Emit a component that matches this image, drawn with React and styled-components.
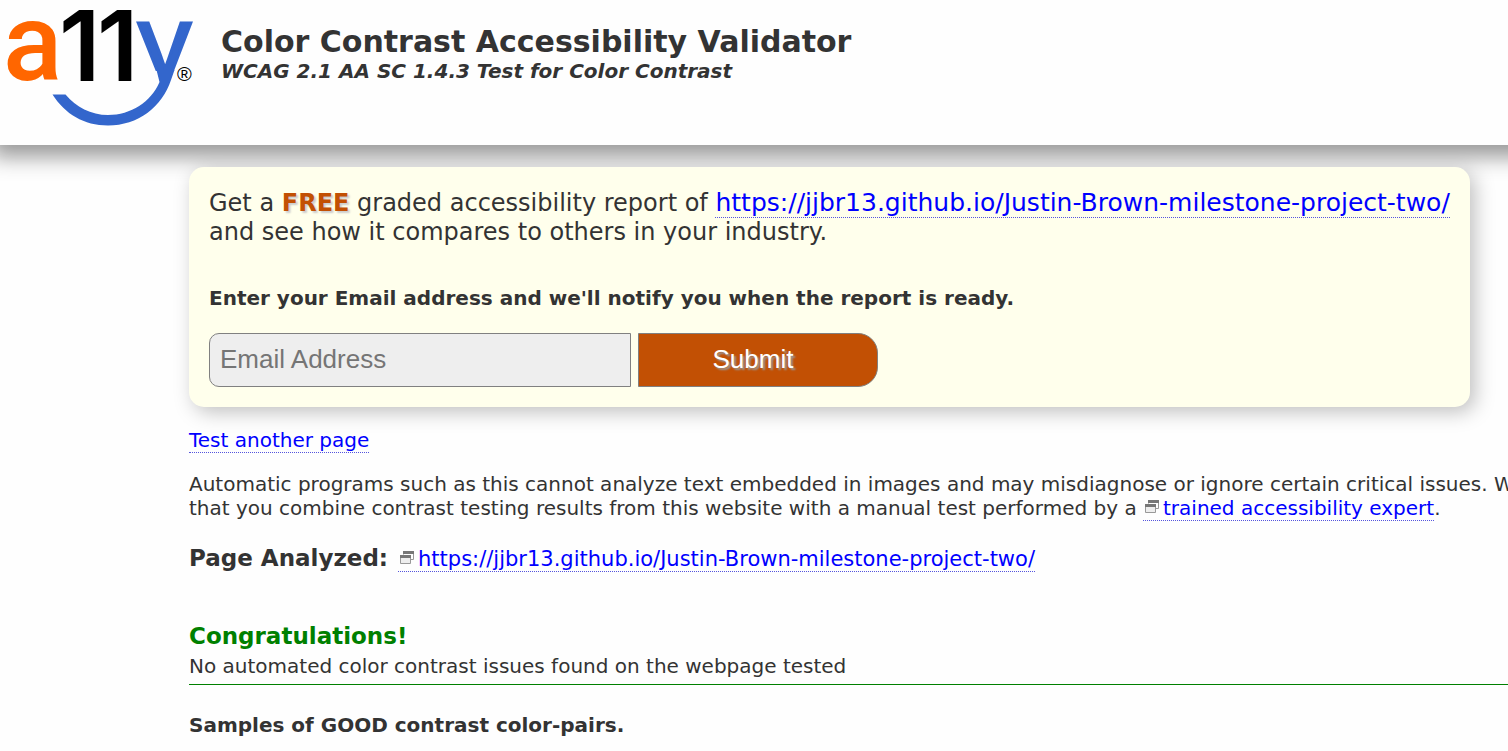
import React from "react";
import styled, { createGlobalStyle } from "styled-components";

const GlobalStyle = createGlobalStyle`
  body {
    margin: 0;
    overflow: hidden;
    background: #fefefe;
    color: #333;
    font: 20px/24px "DejaVu Sans", Verdana, sans-serif;
  }
`;

const Header = styled.header`
  display: flex;
  gap: 25px;
  height: 145px;
  margin-right: -60px;
  background: #fefefe;
  box-shadow: 0 4px 20px 8px #999;
`;

const LogoLink = styled.a`
  display: block;
  width: 196px;
`;

const Logo = styled.svg`
  display: block;
  width: 196px;
  height: 130px;
  overflow: visible;
`;

const Titles = styled.div`
  padding-top: 24px;
`;

const SiteTitle = styled.h1`
  margin: 0;
  font-size: 30px;
  line-height: 36px;
`;

const Subtitle = styled.p`
  margin: 0;
  font-size: 20px;
  line-height: 22px;
  font-weight: bold;
  font-style: italic;
`;

const Main = styled.main`
  padding: 22px 0 0 189px;
  white-space: nowrap;
`;

const Card = styled.section`
  width: fit-content;
  box-sizing: border-box;
  padding: 20px;
  border-radius: 15px;
  background: #ffffec;
  box-shadow: 5px 5px 20px rgba(0, 0, 0, 0.25);
`;

const Offer = styled.p`
  margin: 0;
  padding: 2px 0 39px;
  font-size: 24px;
  line-height: 29px;
`;

const Free = styled.strong`
  color: #c25004;
  text-shadow: 2px 2px 2px #ccc;
`;

const Link = styled.a`
  color: #00f;
  text-decoration: none;
  border-bottom: 1px dotted #55d;
`;

const OfferLink = styled(Link)`
  font-size: 25px;
  line-height: 24px;
`;

const PageLink = styled(Link)`
  font-size: 21px;
`;

const EmailLabel = styled.label`
  display: block;
  font-weight: bold;
  line-height: 24px;
  padding-bottom: 23px;
`;

const Fields = styled.div`
  display: flex;
  gap: 7px;
`;

const EmailInput = styled.input`
  box-sizing: border-box;
  width: 422px;
  height: 54px;
  padding: 0 10px 2px;
  border: 1px solid #808080;
  border-radius: 10px 0 0 10px;
  background: #eee;
  font: 26px "Liberation Sans", Arial, sans-serif;
  &::placeholder {
    color: #757575;
  }
`;

const SubmitButton = styled.button`
  width: 240px;
  height: 54px;
  padding: 0 20px 2px 10px;
  border: 1px solid #808080;
  border-radius: 0 20px 20px 0;
  background: #c25004;
  color: #fff;
  font: 26px "Liberation Sans", Arial, sans-serif;
  text-shadow: 2px 2px 2px #999;
`;

const Content = styled.div`
  padding-top: 1px;
`;

const Paragraph = styled.p`
  margin: 0;
  padding-top: 20px;
`;

const Analyzed = styled.div`
  display: flex;
  align-items: baseline;
  gap: 10px;
  padding-top: 24px;
`;

const Heading = styled.h2`
  margin: 0;
  font-size: 23px;
  line-height: 28px;
`;

const Result = styled.section`
  padding: 50px 0 6px;
  border-bottom: 1px solid #008000;
`;

const ResultTitle = styled(Heading)`
  color: #008000;
  padding-bottom: 4px;
`;

const ResultText = styled.p`
  margin: 0;
`;

const SamplesTitle = styled.h3`
  margin: 0;
  padding: 28px 0;
  font-size: 20px;
`;

const WindowGlyph = styled.svg`
  width: 15px;
  height: 13px;
  margin: 0 3px 2px 2px;
`;

const NewWindowIcon = () => (
  <WindowGlyph viewBox="0 0 15 13" aria-hidden="true">
    <path d="M3.500 1v2.500M13.500 2v6.500H11" fill="none" stroke="#999" />
    <path d="M3 0h11v3H3z" fill="#777" />
    <path d="M.5 5.500h10v7H.5z" fill="#eee" stroke="#999" />
    <path d="M0 4h11v3H0z" fill="#777" />
  </WindowGlyph>
);

const page = "https://jjbr13.github.io/Justin-Brown-milestone-project-two/";

export default function App() {
  return (
    <>
      <GlobalStyle />
      <Header>
        <LogoLink href="#home" aria-label="a11y">
          <Logo viewBox="0 0 196 130">
            <defs>
              <clipPath id="arms">
                <path d="M130 0h66v71h-66z" />
              </clipPath>
            </defs>
            <text x="3" y="80" fontFamily="Roboto" fontWeight="500" fontSize="110" fill="#f60">a</text>
            <text x="59 97" y="81" fontFamily="Inter" fontWeight="600" fontSize="98">11</text>
            <g clipPath="url(#arms)">
              <text x="138" y="79" fontFamily="Liberation Sans" fontSize="106" fill="#36c" stroke="#36c" strokeWidth="3">y</text>
            </g>
            <path d="M52.500 94.500H65.500C76 107 91 115 108 115C131 115 151 102 159.500 82L156.500 70H174.500L171 80C162 107 138 125.500 108 125.500C84 125.500 65 114 52.500 94.500Z" fill="#36c" />
            <text x="177" y="81" fontFamily="Liberation Sans" fontSize="20">®</text>
          </Logo>
        </LogoLink>
        <Titles>
          <SiteTitle>Color Contrast Accessibility Validator</SiteTitle>
          <Subtitle>WCAG 2.1 AA SC 1.4.3 Test for Color Contrast</Subtitle>
        </Titles>
      </Header>
      <Main>
        <Card>
          <Offer>
            Get a <Free>FREE</Free> graded accessibility report of <OfferLink href={page}>{page}</OfferLink>
            <br />
            and see how it compares to others in your industry.
          </Offer>
          <EmailLabel htmlFor="email">
            Enter your Email address and we'll notify you when the report is ready.
          </EmailLabel>
          <Fields>
            <EmailInput id="email" type="email" placeholder="Email Address" />
            <SubmitButton type="submit">Submit</SubmitButton>
          </Fields>
        </Card>
        <Content>
          <Paragraph>
            <Link href="#test">Test another page</Link>
          </Paragraph>
          <Paragraph>
            Automatic programs such as this cannot analyze text embedded in images and may misdiagnose or ignore certain critical issues. We recommend
            <br />
            that you combine contrast testing results from this website with a manual test performed by a{" "}
            <Link href="#expert"><NewWindowIcon />trained accessibility expert</Link>.
          </Paragraph>
          <Analyzed>
            <Heading>Page Analyzed:</Heading>
            <PageLink href={page}><NewWindowIcon />{page}</PageLink>
          </Analyzed>
          <Result>
            <ResultTitle>Congratulations!</ResultTitle>
            <ResultText>No automated color contrast issues found on the webpage tested</ResultText>
          </Result>
          <SamplesTitle>Samples of GOOD contrast color-pairs.</SamplesTitle>
        </Content>
      </Main>
    </>
  );
}
